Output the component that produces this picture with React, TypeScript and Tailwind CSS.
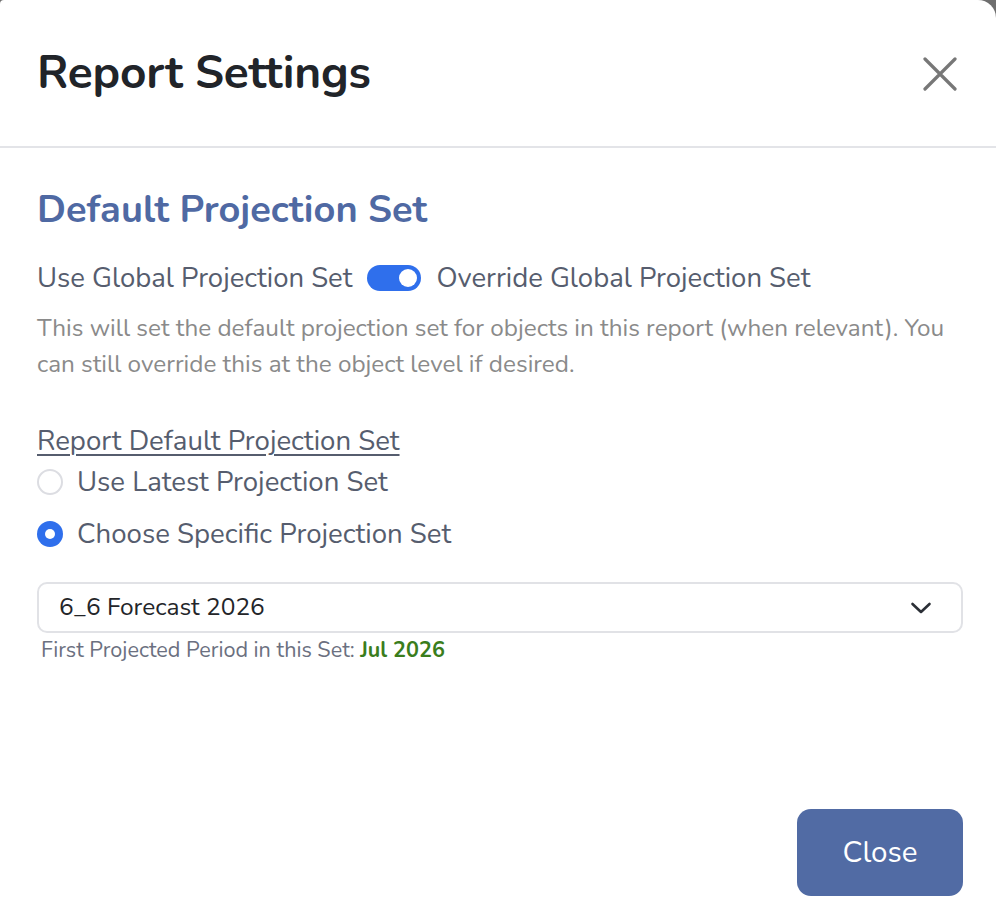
import { useState } from "react"

function ChevronDown() {
  return (
    <svg width="22" height="14" viewBox="0 0 22 14" fill="none">
      <path d="M2.5 3 L11 11 L19.5 3" stroke="#2b2f36" strokeWidth="2.6" strokeLinecap="round" strokeLinejoin="round" />
    </svg>
  )
}

function CloseIcon() {
  return (
    <svg width="34" height="34" viewBox="0 0 34 34" fill="none">
      <path d="M2 2 L32 32 M32 2 L2 32" stroke="#777777" strokeWidth="3.2" strokeLinecap="round" />
    </svg>
  )
}

function Radio({ checked, label, onClick }: { checked: boolean; label: string; onClick: () => void }) {
  return (
    <label className="flex items-center gap-[14px] cursor-pointer" onClick={onClick}>
      {checked ? (
        <span className="w-[26px] h-[26px] rounded-full bg-[#2f6fec] flex items-center justify-center">
          <span className="w-[10px] h-[10px] rounded-full bg-white" />
        </span>
      ) : (
        <span className="w-[26px] h-[26px] rounded-full border-2 border-[#dcdde2] bg-white" />
      )}
      <span className="text-[27.6px] leading-[36px] text-[#565d6e]">{label}</span>
    </label>
  )
}

export default function App() {
  const [override, setOverride] = useState(true)
  const [choice, setChoice] = useState<"latest" | "specific">("specific")

  return (
    <div className="min-h-screen bg-[#6e6e6e] font-['Nunito','Open_Sans',sans-serif]">
      <div className="bg-white min-h-[922px] w-[996px] rounded-tl-[4px] rounded-tr-[18px] flex flex-col">
        {/* header */}
        <div className="h-[148px] pl-[37px] pr-[39px] flex items-center justify-between border-b-2 border-[#e3e4e8]">
          <h1 className="text-[46px] font-bold text-[#212429] tracking-[-0.2px] leading-[56px]">Report Settings</h1>
          <button className="mt-[1px]">
            <CloseIcon />
          </button>
        </div>

        {/* body */}
        <div className="flex-1 px-[37px] pt-[38px]">
          <h2 className="text-[38px] font-bold text-[#4f69a3] leading-[48px]">Default Projection Set</h2>

          <div className="mt-[26px] flex items-center gap-[15px] text-[27.5px] text-[#565d6e] leading-[36px]">
            <span>Use Global Projection Set</span>
            <button
              onClick={() => setOverride(!override)}
              className={`w-[54px] h-[26px] rounded-full flex items-center px-[4px] ${override ? "bg-[#2f6fec] justify-end" : "bg-[#c9ccd4] justify-start"}`}
            >
              <span className="w-[18px] h-[18px] rounded-full bg-white" />
            </button>
            <span>Override Global Projection Set</span>
          </div>

          <p className="mt-[14px] text-[24.3px] text-[#8a8a8a] leading-[36px]">
            This will set the default projection set for objects in this report (when relevant). You can still override this at the object level if desired.
          </p>

          <div className="mt-[42px]">
            <div className="text-[27.6px] text-[#565d6e] underline underline-offset-[4px] decoration-[1.5px] leading-[34px]">
              Report Default Projection Set
            </div>
            <div className="mt-[6px] flex flex-col gap-[16px]">
              <Radio checked={choice === "latest"} label="Use Latest Projection Set" onClick={() => setChoice("latest")} />
              <Radio checked={choice === "specific"} label="Choose Specific Projection Set" onClick={() => setChoice("specific")} />
            </div>
          </div>

          <div className="mt-[30px]">
            <div className="h-[51px] w-[926px] rounded-[10px] border-2 border-[#e1e2e6] flex items-center justify-between pl-[20px] pr-[29px]">
              <span className="text-[24.5px] text-[#232529]">6_6 Forecast 2026</span>
              <ChevronDown />
            </div>
            <div className="mt-[4px] ml-[4px] text-[21.6px] text-[#6b7080] leading-[26px]">
              First Projected Period in this Set: <span className="font-bold text-[#3a7d1c]">Jul 2026</span>
            </div>
          </div>
        </div>

        {/* footer */}
        <div className="flex justify-end px-[33px] pb-[26px]">
          <button className="w-[166px] h-[87px] rounded-[14px] bg-[#516ba4] text-white text-[29.6px]">Close</button>
        </div>
      </div>
    </div>
  )
}
